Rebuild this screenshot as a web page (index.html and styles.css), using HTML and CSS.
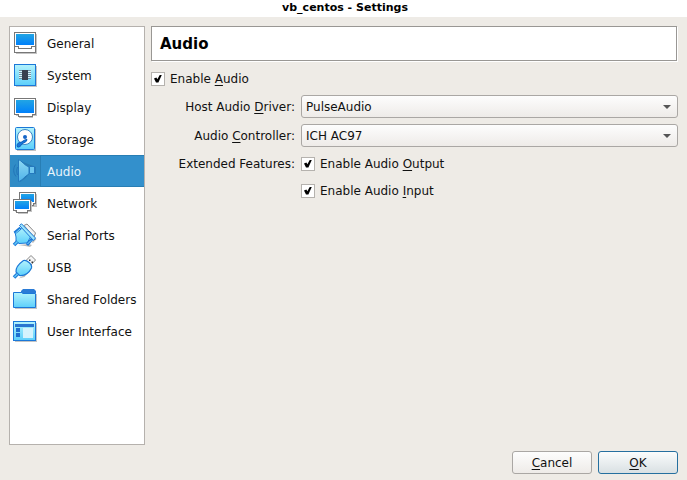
FILE: index.html
```html
<!DOCTYPE html>
<html lang="en">
<head>
<meta charset="utf-8">
<title>vb_centos - Settings</title>
<link rel="stylesheet" href="styles.css">
</head>
<body>
<svg class="defs" width="0" height="0" aria-hidden="true">
  <defs>
    <linearGradient id="screen" x1="0" y1="0" x2="0" y2="1"><stop offset="0" stop-color="#22a5e4"/><stop offset="1" stop-color="#0080fa"/></linearGradient>
    <linearGradient id="light" x1="0" y1="0" x2="0" y2="1"><stop offset="0" stop-color="#b4f3fc"/><stop offset="1" stop-color="#5ccffb"/></linearGradient>
    <linearGradient id="horn" x1="0" y1="0" x2="0" y2="1"><stop offset="0" stop-color="#8fd8f2"/><stop offset="1" stop-color="#4fb3ea"/></linearGradient>
  </defs>
</svg>
<header class="titlebar">vb_centos - Settings</header>
<form class="dialog">
  <div class="content">
    <nav class="sidebar" aria-label="Settings categories">
      <button type="button" class="item">
        <svg class="icon" viewBox="0 0 24 24" shape-rendering="crispEdges"><path d="M3 3h21v20H3z" fill="#c4c4c4"/><path d="M1.5 1.5h21v20h-21z" fill="#fff" stroke="#777"/><path d="M3 3h18v11H3z" fill="url(#screen)"/><path d="M2 15.500h3.500v2h13v-2H22" fill="none" stroke="#777"/></svg>
        <span class="name">General</span>
      </button>
      <button type="button" class="item">
        <svg class="icon" viewBox="0 0 24 24" shape-rendering="crispEdges"><path d="M3 3h21v21H3z" fill="#c4c4c4"/><path d="M1.500 1.500h21v21h-21z" fill="url(#light)" stroke="#1b78d8"/><path d="M6 7.500h12M6 9.500h12M6 11.500h12M6 13.500h12M6 15.500h12" stroke="#6f91a3"/><path d="M6 8.500h12M6 10.500h12M6 12.500h12M6 14.500h12" stroke="#d8f6fc"/><path d="M9 7h6v10H9z" fill="#38404e"/></svg>
        <span class="name">System</span>
      </button>
      <button type="button" class="item">
        <svg class="icon" viewBox="0 0 24 24" shape-rendering="crispEdges"><path d="M3 5h21v16h-4v2H6v-2H3z" fill="#c4c4c4"/><path d="M1.500 3.500h21v16h-3v2h-14v-2h-4z" fill="#fff" stroke="#777"/><path d="M3 5h18v13H3z" fill="url(#screen)"/></svg>
        <span class="name">Display</span>
      </button>
      <button type="button" class="item">
        <svg class="icon" viewBox="0 0 24 24"><path d="M4 2h19v22H4z" fill="#c4c4c4"/><rect x="2.500" y=".5" width="19" height="22" rx="1" fill="url(#light)" stroke="#1b78d8"/><circle cx="12" cy="10" r="7.500" fill="#fff" stroke="#3b84c4"/><circle cx="12" cy="10" r="2" fill="#1565c8"/><path d="M14 12.500c0 3-4 3-5 4.500-1 2-3 3.500-4.500 3-1-2 0-4 2-4.500 3 0 4-3 7.500-3z" fill="#1777dc" stroke="#0b5cb8"/></svg>
        <span class="name">Storage</span>
      </button>
      <button type="button" class="item selected" aria-current="page">
        <svg class="icon" viewBox="0 0 24 24"><path d="M7 2v21c4-2 6-5 9-8h7V8" fill="#2a7cb2"/><path d="M5.500.5c3 1 6 6 10.500 7.500v7c-4 2-7 7-10.500 7.500z" fill="url(#horn)" stroke="#2478be"/><path d="M16.500 7.500h5v7h-5z" fill="#6dc6ef" stroke="#2478be"/><path d="M2.500 5.500c-2.500 4-2.500 8 .5 12M4.500 8c-1 3-1 5 0 8" fill="none" stroke="#2274b8"/></svg>
        <span class="name">Audio</span>
      </button>
      <button type="button" class="item">
        <svg class="icon" viewBox="0 0 24 24" shape-rendering="crispEdges"><path d="M8 3h16v13h-6z" fill="#c4c4c4"/><path d="M6.500 1.500h16v11h-2v2h-4v-4h-10z" fill="#fff" stroke="#777"/><path d="M8 3h13v8H8z" fill="url(#screen)"/><path d="M2 10h17v11h-4v2H5v-2H2z" fill="#c4c4c4"/><path d="M.5 8.500h17v11h-3v2h-11v-2h-3z" fill="#fff" stroke="#777"/><path d="M2 10h14v8H2z" fill="url(#screen)"/></svg>
        <span class="name">Network</span>
      </button>
      <button type="button" class="item">
        <svg class="icon" viewBox="0 0 24 24"><path d="m11 2.500 3-1.500 8.500 9-1.500 4z" fill="#f4f4f4" stroke="#888"/><path d="m20 20 3.500-4-1-1-4 4zM5 22l11-1 3 1-2 2-5-1z" fill="#bbb"/><path d="M5 7.500 2 9l1 5v4l3 2.500 8-.5 3-5 1-3-8-8z" fill="url(#light)" stroke="#1b78d8"/><path d="M6.500 2.500 8.500.8 22.500 15l-2 2.500z" fill="#9fe6fc" stroke="#1b78d8"/><path d="m7.500 5-6 5M19 16l-5 6" stroke="#1b78d8" stroke-width="3"/><path d="m7 6-4.500 4M18 17.500 14.500 21" stroke="#80dafa"/><path d="M4.500 18.500 1 22" stroke="#1b78d8" stroke-width="3.500"/><path d="m4.500 18.500-3 3" stroke="#65c9f5" stroke-width="1.500"/></svg>
        <span class="name">Serial Ports</span>
      </button>
      <button type="button" class="item">
        <svg class="icon" viewBox="0 0 24 24"><path d="m12.500 6 5.500-5.500 4.500 4.500L17 11z" fill="#f5f5f5" stroke="#888"/><path d="M16 4.500h1.500V6H16zM18.500 6.500H20V8h-1.500z" fill="#333"/><path d="m19.500 13-8 9-6 1.500 5-3z" fill="#bbb"/><path d="M10.500 5.500c3-1 9 4 8 7.500-2.500 5-6 8-12 7.500L3 17c-.500-5 4-9 7.500-11.500z" fill="url(#light)" stroke="#1b78d8" stroke-width="1.200"/><path d="M4.500 19 1 22.500" stroke="#1b78d8" stroke-width="3.500"/><path d="m4.500 19-3 3" stroke="#65c9f5" stroke-width="1.300"/></svg>
        <span class="name">USB</span>
      </button>
      <button type="button" class="item">
        <svg class="icon" viewBox="0 0 24 24"><path d="M2 7h22v15H2z" fill="#c4c4c4"/><path d="M.5 5.500h8l1 1h13v14H.5z" fill="url(#light)" stroke="#1b78d8"/><path d="M8 6V4l2-2h11l2 2v2H8z" fill="#2a7bd6"/></svg>
        <span class="name">Shared Folders</span>
      </button>
      <button type="button" class="item">
        <svg class="icon" viewBox="0 0 24 24" shape-rendering="crispEdges"><path d="M2 4h22v19H2z" fill="#c4c4c4"/><path d="M.5 2.500h22v19H.5z" fill="url(#light)" stroke="#1b78d8"/><path d="M2 5h19v3H2z" fill="#2a75d0"/><path d="M3 9h4v4H3zM3 14h4v4H3z" fill="#1f6fd0"/><path d="M10 9h10v10H10z" fill="#d4f3fd"/></svg>
        <span class="name">User Interface</span>
      </button>
    </nav>
    <main class="page">
      <h1 class="heading">Audio</h1>
      <label class="check"><input type="checkbox" checked><span>Enable <u>A</u>udio</span></label>
      <div class="fields">
        <label class="caption" for="driver">Host Audio <u>D</u>river:</label>
        <div class="combo"><select id="driver"><option>PulseAudio</option></select></div>
        <label class="caption" for="controller">Audio <u>C</u>ontroller:</label>
        <div class="combo"><select id="controller"><option>ICH AC97</option></select></div>
        <span class="caption" id="features">Extended Features:</span>
        <div class="features" role="group" aria-labelledby="features">
          <label class="check"><input type="checkbox" checked><span>Enable Audio <u>O</u>utput</span></label>
          <label class="check"><input type="checkbox" checked><span>Enable Audio <u>I</u>nput</span></label>
        </div>
      </div>
    </main>
  </div>
  <footer class="actions">
    <button type="button" class="action"><span><u>C</u>ancel</span></button>
    <button type="submit" class="action primary"><span><u>O</u>K</span></button>
  </footer>
</form>
</body>
</html>
```
FILE: styles.css
```css
* {
  box-sizing: border-box;
}

body {
  margin: 0;
  min-height: 100vh;
  display: flex;
  flex-direction: column;
  background: #eeebe6;
  color: #111;
  font: 12px/16px "DejaVu Sans", sans-serif;
}

button,
select {
  font: inherit;
  color: inherit;
}

u {
  text-decoration-thickness: 1px;
  text-underline-offset: 2px;
  text-decoration-skip-ink: none;
}

.defs {
  position: absolute;
}

.titlebar {
  height: 17px;
  background: #fff;
  color: #000;
  text-align: center;
  font-size: 11px;
  font-weight: bold;
  line-height: 15px;
  padding-left: 3px;
}

.dialog {
  flex: 1;
  display: flex;
  flex-direction: column;
  gap: 6px;
  padding: 9px 9px 6px;
}

.content {
  flex: 1;
  display: flex;
  gap: 6px;
}

.sidebar {
  flex: none;
  width: 136px;
  background: #fff;
  border: 1px solid #b5b1ad;
}

.item {
  display: flex;
  width: 100%;
  height: 32px;
  padding: 0;
  border: 0;
  background: none;
  text-align: left;
}

.icon {
  flex: none;
  width: 24px;
  height: 24px;
  margin: 4px 3px;
  overflow: visible;
}

.name {
  flex: 1;
  padding: 9px 0 7px 7px;
  white-space: nowrap;
}

.selected {
  background: #308cc6;
  color: #e8f4fb;
}

.selected .name {
  padding: 8px 0 6px 6px;
  border: 1px solid #287eb4;
  border-right: 0;
  background: #3390cc;
}

.page {
  flex: 1;
  min-width: 0;
}

.heading {
  height: 35px;
  margin: 0 1px 10px 0;
  padding: 0 8px;
  border: 1px solid #999794;
  background: #fff;
  box-shadow: 1px 1px #fff;
  color: #000;
  font-size: 15px;
  line-height: 34px;
}

.check {
  display: flex;
  align-items: center;
  gap: 5px;
  height: 15px;
}

.check input {
  appearance: none;
  flex: none;
  display: grid;
  place-items: center;
  width: 14px;
  height: 14px;
  margin: 0;
  border: 1px solid #b5b2ae;
  background: #fff;
}

.check input:checked::before {
  content: "";
  width: 8px;
  height: 8px;
  background: #000;
  clip-path: polygon(0 50%, 30% 38%, 42% 58%, 75% 0, 100% 0, 55% 100%, 25% 100%);
}

.fields {
  display: grid;
  grid-template-columns: 144px 1fr;
  gap: 6px;
  margin-top: 9px;
}

.caption {
  text-align: right;
  line-height: 24px;
  height: 23px;
}

.combo {
  position: relative;
}

.combo select {
  appearance: none;
  display: block;
  width: 100%;
  height: 23px;
  padding: 0 20px 0 4px;
  border: 1px solid #aaa7a4;
  border-radius: 3px;
  background: linear-gradient(#fdfdfd, #eeebe8);
}

.combo::after {
  content: "";
  position: absolute;
  right: 7px;
  top: 10px;
  border: 4px solid transparent;
  border-top-color: #555;
  border-bottom: 0;
  pointer-events: none;
}

#features {
  line-height: 22px;
}

.features {
  display: grid;
  gap: 12px;
  align-content: start;
  padding-top: 3px;
}

.actions {
  display: flex;
  justify-content: flex-end;
  gap: 6px;
}

.action {
  width: 80px;
  height: 23px;
  padding: 0;
  border: 1px solid #aaa7a4;
  border-radius: 3px;
  background: linear-gradient(#fdfdfd, #eeebe8);
}

.primary {
  border-color: #256f9f;
  background: linear-gradient(#fafcfc, #d9e0e3);
}
```
